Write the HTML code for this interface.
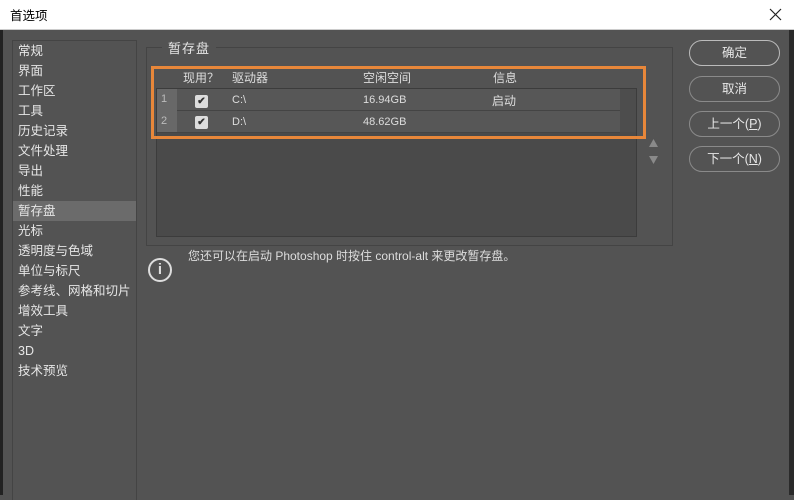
<!DOCTYPE html>
<html><head><meta charset="utf-8"><style>
*{margin:0;padding:0;box-sizing:border-box}
body{width:794px;height:495px;overflow:hidden;background:#535353;font-family:"Liberation Sans","Noto Sans CJK SC",sans-serif;font-size:12px;color:#ddd;position:relative}
.a{position:absolute}
.title{left:0;top:0;width:794px;height:30px;background:#fff;color:#000;border-bottom:1px solid #ccc}
.side{left:12px;top:40px;width:125px;height:460px;background:#535353;border:1px solid #444;border-bottom:none}
.side div{height:20px;line-height:20px;padding-left:5px;font-size:12.5px;color:#e6e6e6}
.side .sel{background:#6b6b6b}
.btn{left:689px;width:91px;height:26px;border:1px solid #8a8a8a;border-radius:13px;text-align:center;line-height:24px;font-size:12.5px;color:#e6e6e6}
</style></head><body>
<div class="a title"><span class="a" style="left:10px;top:5px;font-size:12.5px">首选项</span>
<svg class="a" style="left:769px;top:8px" width="13" height="13" viewBox="0 0 13 13"><path d="M1 1L12 12M12 1L1 12" stroke="#222" stroke-width="1.2"/></svg></div>
<div class="a" style="left:0;top:30px;width:3px;height:465px;background:#222"></div>
<div class="a" style="left:789px;top:30px;width:5px;height:465px;background:#2a2a2a"></div>
<div class="a side">
<div>常规</div><div>界面</div><div>工作区</div><div>工具</div><div>历史记录</div><div>文件处理</div><div>导出</div><div>性能</div><div class="sel">暂存盘</div><div>光标</div><div>透明度与色域</div><div>单位与标尺</div><div>参考线、网格和切片</div><div>增效工具</div><div>文字</div><div>3D</div><div>技术预览</div>
</div>
<div class="a" style="left:146px;top:47px;width:527px;height:199px;border:1px solid #444"></div>
<div class="a" style="left:162px;top:38px;padding:0 6px;background:#535353;font-size:13px;color:#e6e6e6;letter-spacing:1px">暂存盘</div>
<div class="a" style="left:156px;top:88px;width:481px;height:149px;background:#4a4a4a;border:1px solid #3c3c3c"></div>
<div class="a" style="left:157px;top:89px;width:463px;height:43px;background:#575757"></div>
<div class="a" style="left:157px;top:110px;width:463px;height:1px;background:#444"></div>
<div class="a" style="left:157px;top:132px;width:463px;height:1px;background:#444"></div>
<div class="a" style="left:157px;top:89px;width:20px;height:43px;background:#686868"></div>
<div class="a" style="left:620px;top:89px;width:16px;height:43px;background:#4d4d4d"></div>
<div class="a" style="left:183px;top:69px;font-size:12px">现用？</div>
<div class="a" style="left:232px;top:69px">驱动器</div>
<div class="a" style="left:363px;top:69px">空闲空间</div>
<div class="a" style="left:493px;top:69px">信息</div>
<div class="a" style="left:161px;top:93px;font-size:11px;color:#bbb">1</div>
<div class="a" style="left:161px;top:115px;font-size:11px;color:#bbb">2</div>
<div class="a" style="left:195px;top:95px;width:13px;height:13px;background:#ddd;border-radius:2px;color:#333;font-size:10px;line-height:13px;text-align:center;font-weight:bold">✔</div>
<div class="a" style="left:195px;top:116px;width:13px;height:13px;background:#ddd;border-radius:2px;color:#333;font-size:10px;line-height:13px;text-align:center;font-weight:bold">✔</div>
<div class="a" style="left:232px;top:94px;font-size:11px">C:\</div>
<div class="a" style="left:232px;top:116px;font-size:11px">D:\</div>
<div class="a" style="left:363px;top:94px;font-size:11px">16.94GB</div>
<div class="a" style="left:363px;top:116px;font-size:11px">48.62GB</div>
<div class="a" style="left:492px;top:92px">启动</div>
<div class="a" style="left:151px;top:66px;width:495px;height:73px;border:3px solid #e8873a"></div>
<svg class="a" style="left:648px;top:138px" width="11" height="28" viewBox="0 0 11 28"><path d="M5.5 1L10 9H1Z M1 18H10L5.5 26Z" fill="#8a8a8a"/></svg>
<div class="a btn" style="top:40px;border-color:#bbb">确定</div>
<div class="a btn" style="top:76px">取消</div>
<div class="a btn" style="top:111px">上一个(<u>P</u>)</div>
<div class="a btn" style="top:146px">下一个(<u>N</u>)</div>
<div class="a" style="left:148px;top:258px;width:24px;height:24px;border:2px solid #ddd;border-radius:50%;text-align:center;line-height:19px;font-size:15px;font-weight:bold;color:#ddd">i</div>
<div class="a" style="left:188px;top:247px;font-size:12px;color:#ddd">您还可以在启动 Photoshop 时按住 control-alt 来更改暂存盘。</div>
</body></html>
